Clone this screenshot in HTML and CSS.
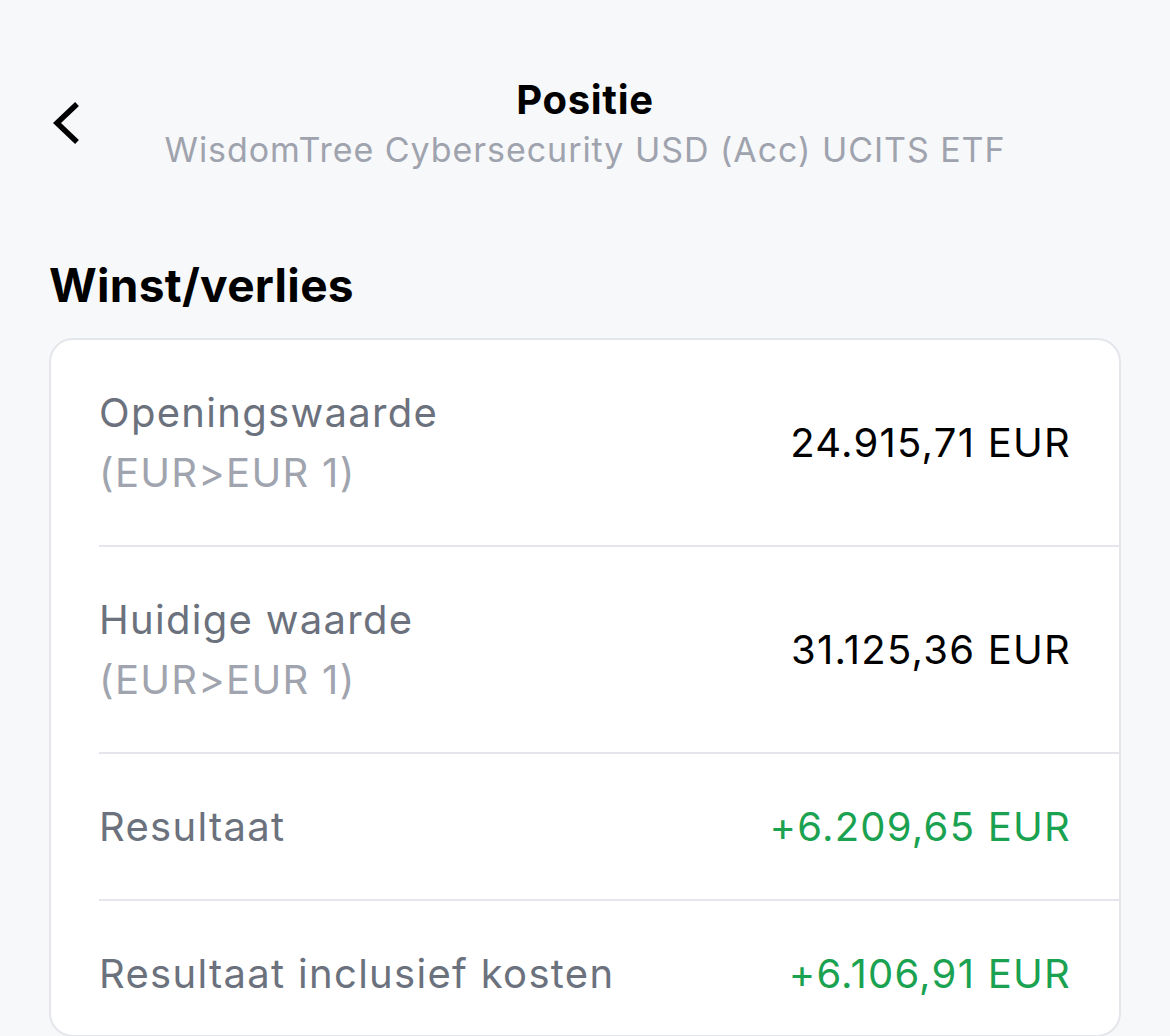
FILE: index.html
```html
<!DOCTYPE html>
<html lang="nl">
<head>
    <meta charset="UTF-8">
    <meta name="viewport" content="width=device-width, initial-scale=1.0">
    <title>Positie</title>
    <link rel="stylesheet" href="styles.css">
</head>
<body>
    <div class="header">
        <button class="back" type="button" aria-label="Terug">
            <svg width="34" height="44" viewBox="0 0 34 44">
                <polyline points="24,4 6,21 24,38" fill="none" stroke="#000" stroke-width="5.5" stroke-linecap="square" stroke-linejoin="miter"/>
            </svg>
        </button>
        <div class="titles">
            <h1 class="title">Positie</h1>
            <div class="subtitle">WisdomTree Cybersecurity USD (Acc) UCITS ETF</div>
        </div>
        <div></div>
    </div>

    <h2 class="section-title">Winst/verlies</h2>

    <div class="card">
        <div class="row">
            <div class="label">
                Openingswaarde
                <span class="rate">(EUR&gt;EUR 1)</span>
            </div>
            <div class="value">24.915,71 EUR</div>
        </div>
        <div class="row">
            <div class="label">
                Huidige waarde
                <span class="rate">(EUR&gt;EUR 1)</span>
            </div>
            <div class="value">31.125,36 EUR</div>
        </div>
        <div class="row">
            <div class="label">Resultaat</div>
            <div class="value positive">+6.209,65 EUR</div>
        </div>
        <div class="row last">
            <div class="label">Resultaat inclusief kosten</div>
            <div class="value positive">+6.106,91 EUR</div>
        </div>
    </div>
</body>
</html>
```

FILE: styles.css
```css
body {
    margin: 0;
    padding: 0 49px;
    background-color: #f7f8fa;
    font-family: Inter, "Noto Sans", sans-serif;
    color: #000;
}

/* Top bar with back arrow and centered title */
.header {
    display: grid;
    grid-template-columns: 1fr auto 1fr;
    align-items: center;
    padding-top: 76px;
}

.back {
    justify-self: start;
    background: none;
    border: none;
    padding: 0;
    margin-left: 2px;
    cursor: pointer;
    display: flex;
}

.titles {
    text-align: center;
}

.title {
    margin: 0;
    font-size: 40px;
    line-height: 48px;
    font-weight: 700;
    letter-spacing: 0.7px;
}

.subtitle {
    margin-top: 4px;
    font-size: 34px;
    line-height: 44px;
    letter-spacing: 0.95px;
    color: #9fa3ae;
}

/* Section heading */
.section-title {
    margin: 85px 0 25px;
    font-size: 46px;
    line-height: 56px;
    font-weight: 700;
    letter-spacing: 0.3px;
}

/* Card with the result rows */
.card {
    background-color: #fff;
    border: 2px solid #e5e6eb;
    border-radius: 24px;
}

.row {
    display: flex;
    justify-content: space-between;
    align-items: center;
    margin-left: 48px;
    padding: 42.5px 48px 42.5px 0;
    border-bottom: 2px solid #e5e6eb;
}

.row.last {
    border-bottom: none;
    padding-bottom: 31px;
}

.label {
    font-size: 40px;
    line-height: 60px;
    letter-spacing: 1.3px;
    color: #6b717d;
}

.rate {
    display: block;
    color: #a0a4ae;
}

.value {
    font-size: 40px;
    line-height: 60px;
    letter-spacing: 1.25px;
    color: #000;
}

.value.positive {
    color: #1aa251;
}
```
